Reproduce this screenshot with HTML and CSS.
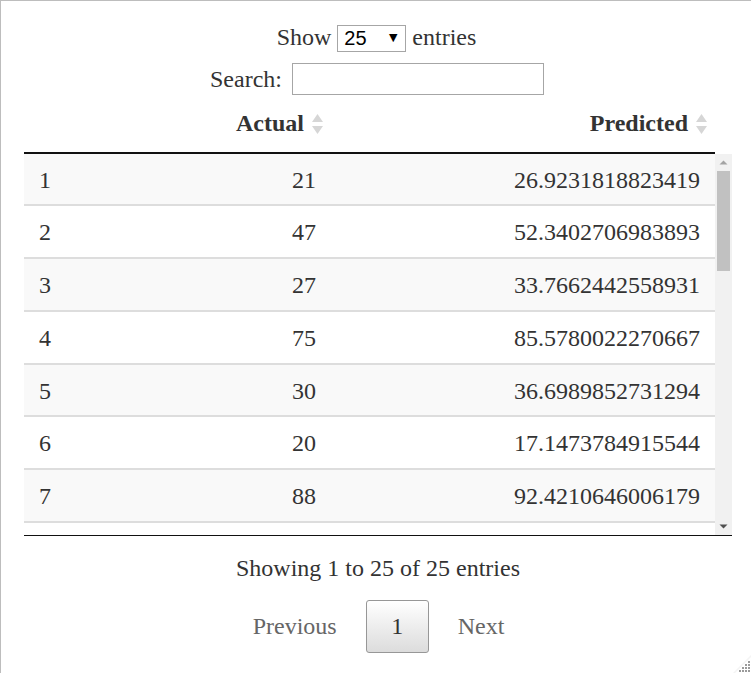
FILE: index.html
```html
<!DOCTYPE html>
<html>
<head>
<meta charset="utf-8">
<link rel="stylesheet" href="styles.css">
</head>
<body>
<div class="frame">
  <div class="wrapper">
    <div class="length">
      <span>Show</span>
      <span class="select-wrap">
        <select class="select"><option>25</option></select>
        <span class="select-arrow">&#9660;</span>
      </span>
      <span>entries</span>
    </div>
    <div class="filter">
      <span>Search:</span>
      <input class="search" type="search">
    </div>
    <div class="scroll-head">
      <table class="tbl">
        <colgroup><col class="c1"><col class="c2"><col class="c3"></colgroup>
        <thead>
          <tr>
            <th></th>
            <th class="num">Actual<svg class="sort" width="11" height="22" viewBox="0 0 11 22"><polygon points="0,9 5.5,1 11,9" fill="#d6d6d6"/><polygon points="0,13 11,13 5.5,21" fill="#d6d6d6"/></svg></th>
            <th class="num">Predicted<svg class="sort" width="11" height="22" viewBox="0 0 11 22"><polygon points="0,9 5.5,1 11,9" fill="#d6d6d6"/><polygon points="0,13 11,13 5.5,21" fill="#d6d6d6"/></svg></th>
          </tr>
        </thead>
      </table>
    </div>
    <div class="scroll-body">
      <div class="body-clip">
        <table class="tbl">
          <colgroup><col class="c1"><col class="c2"><col class="c3"></colgroup>
          <tbody>
            <tr><td>1</td><td class="num">21</td><td class="num">26.9231818823419</td></tr>
            <tr><td>2</td><td class="num">47</td><td class="num">52.3402706983893</td></tr>
            <tr><td>3</td><td class="num">27</td><td class="num">33.7662442558931</td></tr>
            <tr><td>4</td><td class="num">75</td><td class="num">85.5780022270667</td></tr>
            <tr><td>5</td><td class="num">30</td><td class="num">36.6989852731294</td></tr>
            <tr><td>6</td><td class="num">20</td><td class="num">17.1473784915544</td></tr>
            <tr><td>7</td><td class="num">88</td><td class="num">92.4210646006179</td></tr>
            <tr class="peek"><td></td><td></td><td></td></tr>
          </tbody>
        </table>
      </div>
      <div class="scrollbar">
        <div class="sb-btn"><svg width="17" height="17" viewBox="0 0 17 17"><polygon points="4.5,10.5 8.5,6.5 12.5,10.5" fill="#a3a3a3"/></svg></div>
        <div class="sb-thumb"></div>
        <div class="sb-space"></div>
        <div class="sb-btn"><svg width="17" height="17" viewBox="0 0 17 17"><polygon points="4.5,6.5 12.5,6.5 8.5,10.5" fill="#505050"/></svg></div>
      </div>
    </div>
    <div class="info">Showing 1 to 25 of 25 entries</div>
    <div class="paginate">
      <span class="pg disabled">Previous</span>
      <span class="pg current">1</span>
      <span class="pg disabled">Next</span>
    </div>
  </div>
  <svg class="grip" width="22" height="22" viewBox="0 0 22 22">
    <polygon points="22,4 22,6 6,22 4,22" fill="#f4f4f4"/>
    <g fill="#9a9a9a">
      <rect x="19" y="10" width="2" height="2"/>
      <rect x="16" y="13" width="2" height="2"/><rect x="19" y="13" width="2" height="2"/>
      <rect x="13" y="16" width="2" height="2"/><rect x="16" y="16" width="2" height="2"/><rect x="19" y="16" width="2" height="2"/>
      <rect x="10" y="19" width="2" height="2"/><rect x="13" y="19" width="2" height="2"/><rect x="16" y="19" width="2" height="2"/><rect x="19" y="19" width="2" height="2"/>
    </g>
  </svg>
</div>
</body>
</html>
```

FILE: styles.css
```css
html, body {
  margin: 0;
  padding: 0;
  background: #ffffff;
}
body {
  font-family: "Liberation Serif", "Times New Roman", serif;
  font-size: 24px;
  color: #333333;
}
.frame {
  position: relative;
  box-sizing: border-box;
  width: 751px;
  height: 673px;
  border-top: 1px solid #bdbdbd;
  border-left: 1px solid #bdbdbd;
  padding-left: 23px;
  overflow: hidden;
}
.wrapper {
  width: 708px;
}
.length {
  margin-top: 23px;
  height: 27px;
  display: flex;
  justify-content: center;
  align-items: center;
  gap: 6px;
  line-height: 27px;
  padding-right: 3px;
}
.select-wrap {
  position: relative;
  display: inline-block;
  width: 69px;
  height: 27px;
}
.select {
  -webkit-appearance: none;
  appearance: none;
  box-sizing: border-box;
  width: 69px;
  height: 27px;
  margin: 0;
  padding: 0 0 0 6px;
  border: 1px solid #a6a6a6;
  border-radius: 0;
  background: #ffffff;
  font-family: "Liberation Sans", Arial, sans-serif;
  font-size: 20px;
  color: #000000;
}
.select-arrow {
  position: absolute;
  right: 9px;
  top: 0;
  line-height: 27px;
  font-family: "DejaVu Sans", sans-serif;
  font-size: 11px;
  color: #000000;
  pointer-events: none;
}
.filter {
  margin-top: 12px;
  height: 32px;
  display: flex;
  justify-content: center;
  align-items: center;
  gap: 10px;
  padding-right: 2px;
}
.search {
  box-sizing: border-box;
  width: 252px;
  height: 32px;
  margin: 0;
  padding: 2px 4px;
  border: 1px solid #a6a6a6;
  border-radius: 0;
  background: transparent;
  font-family: "Liberation Sans", Arial, sans-serif;
  font-size: 20px;
}
.scroll-head {
  padding-right: 17px;
}
.tbl {
  width: 691px;
  table-layout: fixed;
  border-collapse: separate;
  border-spacing: 0;
}
.c1 { width: 150px; }
.c2 { width: 157px; }
.c3 { width: 384px; }
.tbl th {
  font-weight: bold;
  text-align: left;
  padding: 15px 8px 15px 15px;
  line-height: 27.2px;
  border-bottom: 2px solid #111111;
  white-space: nowrap;
}
.tbl th.num {
  text-align: right;
}
.sort {
  display: inline-block;
  vertical-align: -4px;
  margin-left: 8px;
}
.scroll-body {
  display: flex;
  height: 381px;
  border-bottom: 1.5px solid #111111;
}
.body-clip {
  width: 691px;
  height: 381px;
  overflow: hidden;
}
.tbl td {
  box-sizing: border-box;
  height: 53px;
  padding: 13px 15px 11px;
  line-height: 27px;
  border-bottom: 2px solid #dddddd;
  white-space: nowrap;
}
.tbl tbody tr:nth-child(4n+1) td {
  height: 52px;
  padding-bottom: 10px;
}
.tbl td.num {
  text-align: right;
}
.tbl tbody tr:nth-child(odd) {
  background: #f9f9f9;
}
.tbl tbody tr:nth-child(even) {
  background: #ffffff;
}
.scrollbar {
  width: 17px;
  height: 381px;
  background: #f1f1f1;
  display: flex;
  flex-direction: column;
}
.sb-btn {
  width: 17px;
  height: 17px;
  flex: none;
}
.sb-btn svg {
  display: block;
}
.sb-thumb {
  flex: none;
  width: 13px;
  height: 100px;
  margin: 0 2px;
  background: #c1c1c1;
}
.sb-space {
  flex: 1;
}
.info {
  margin-top: 19px;
  text-align: center;
  line-height: 27.2px;
}
.paginate {
  margin-top: 18px;
  display: flex;
  justify-content: center;
  align-items: center;
  gap: 29px;
  padding-left: 1px;
}
.pg {
  line-height: 27.2px;
}
.pg.disabled {
  color: #666666;
}
.pg.current {
  box-sizing: border-box;
  width: 63px;
  height: 53px;
  display: flex;
  align-items: center;
  justify-content: center;
  border: 1.5px solid #979797;
  border-radius: 3px;
  background: linear-gradient(to bottom, #ffffff 0%, #dcdcdc 100%);
  color: #333333;
}
.grip {
  position: absolute;
  right: 0;
  bottom: 0;
}
```
